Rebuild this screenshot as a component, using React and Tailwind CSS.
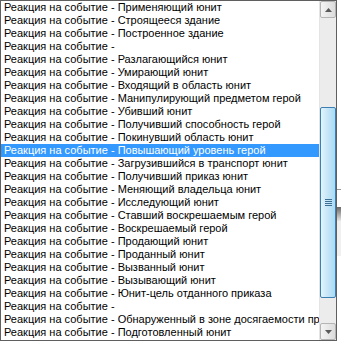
import React from "react";

const items = [
  "Применяющий юнит",
  "Строящееся здание",
  "Построенное здание",
  "",
  "Разлагающийся юнит",
  "Умирающий юнит",
  "Входящий в область юнит",
  "Манипулирующий предметом герой",
  "Убивший юнит",
  "Получивший способность герой",
  "Покинувший область юнит",
  "Повышающий уровень герой",
  "Загрузившийся в транспорт юнит",
  "Получивший приказ юнит",
  "Меняющий владельца юнит",
  "Исследующий юнит",
  "Ставший воскрешаемым герой",
  "Воскрешаемый герой",
  "Продающий юнит",
  "Проданный юнит",
  "Вызванный юнит",
  "Вызывающий юнит",
  "Юнит-цель отданного приказа",
  "",
  "Обнаруженный в зоне досягаемости приказа юнит",
  "Подготовленный юнит",
];

function ArrowBtn({ up }) {
  return (
    <div className="h-[17px] w-[16px] rounded-[2px] border border-[#b5b5b5] bg-gradient-to-r from-[#f4f4f4] to-[#dcdcdc] flex items-center justify-center">
      <svg width="7" height="4" viewBox="0 0 7 4">
        {up ? (
          <path d="M0 4 L3.5 0 L7 4 Z" fill="#5a5a5a" />
        ) : (
          <path d="M0 0 L3.5 4 L7 0 Z" fill="#5a5a5a" />
        )}
      </svg>
    </div>
  );
}

export default function App() {
  return (
    <div className="w-[341px] h-[341px] bg-white overflow-hidden flex">
      <div className="w-[337px] h-[341px] border border-[#5f5f5f] flex bg-white">
        <div
          className="flex-1 flex flex-col overflow-hidden pt-[0px] text-black"
          style={{ fontFamily: '"Liberation Sans", Arial, sans-serif' }}
        >
          {items.map((t, i) => (
            <div
              key={i}
              className={
                "h-[13px] leading-[13px] text-[11px] pl-[3px] whitespace-nowrap " +
                (i === 11 ? "bg-[#3399ff] text-white" : "")
              }
            >
              {"Реакция на событие - " + t}
            </div>
          ))}
        </div>
        <div className="w-[17px] flex flex-col bg-[#ececec] border-l border-[#e4e4e4]">
          <ArrowBtn up />
          <div className="flex-1 flex flex-col">
            <div className="h-[89px]" />
            <div className="h-[191px] w-[16px] rounded-[2px] border border-[#3c7fb1] bg-gradient-to-r from-[#e3f4fc] via-[#c4e5f6] to-[#a9dbf6] flex flex-col items-center justify-center gap-[1px]">
              <div className="w-[7px] h-[1px] bg-[#3d6f94]" />
              <div className="w-[7px] h-[1px] bg-[#3d6f94]" />
              <div className="w-[7px] h-[1px] bg-[#3d6f94]" />
              <div className="w-[7px] h-[1px] bg-[#3d6f94]" />
            </div>
          </div>
          <ArrowBtn />
        </div>
      </div>
      <div className="flex-1 flex flex-col">
        <div className="h-[189px]" />
        <div className="h-[1px] bg-[#9a9a9a]" />
        <div className="h-[17px]" />
        <div className="h-[14px] bg-gradient-to-b from-[#6a6a6a] to-[#e8e8e8]" />
        <div className="h-[35px] bg-[#f0f0f0]" />
      </div>
    </div>
  );
}
